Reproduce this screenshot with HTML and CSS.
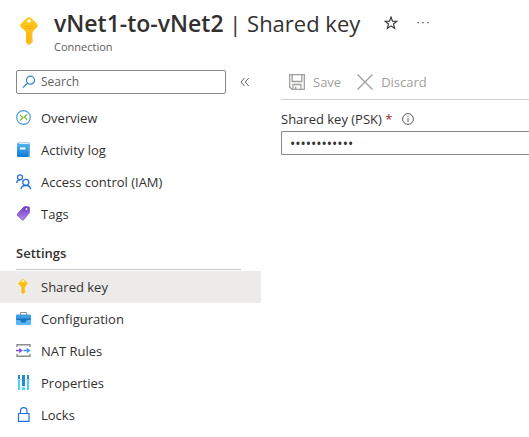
FILE: index.html
```html
<!DOCTYPE html>
<html lang="en">
<head>
<meta charset="utf-8">
<title>vNet1-to-vNet2 | Shared key</title>
<link rel="stylesheet" href="styles.css">
</head>
<body>
<svg class="defs" width="0" height="0" aria-hidden="true">
  <defs>
    <linearGradient id="gold" x1="0" y1="0" x2="0" y2="1"><stop offset="0" stop-color="#ffca1a"/><stop offset="1" stop-color="#fdb913"/></linearGradient>
    <linearGradient id="blue" x1="0" y1="0" x2="0" y2="1"><stop offset="0" stop-color="#50b0f4"/><stop offset="1" stop-color="#0d7cd8"/></linearGradient>
    <linearGradient id="violet" x1="0" y1="0" x2="0" y2="1"><stop offset="0" stop-color="#7137c8"/><stop offset="1" stop-color="#b28ae8"/></linearGradient>
    <symbol id="key" viewBox="0 0 18 28">
      <path d="M7.2 .7Q9 -.4 10.800 .7L17 6.800Q18.600 8.500 17 10.300L12.600 14.800V16.500L12 17.500L12.800 18.500L12 19.500L12.800 20.700L12 21.700L12.800 22.700V24.500L9.800 27.500Q9 28.200 8.200 27.500L6 25.200V14.800L1 10.300Q-.6 8.500 1 6.800Z" fill="url(#gold)"/>
      <circle cx="9" cy="4" r="1.800" fill="#fff"/>
      <path d="M5.200 9.500H13M5.200 11.500H13" stroke="#ffa81c" stroke-width="1"/>
      <path d="M8.200 15.500V25" stroke="#ffa81c" stroke-width="1.200"/>
    </symbol>
  </defs>
</svg>
<header class="header">
  <svg class="header-icon" viewBox="0 0 18 28" aria-hidden="true"><use href="#key"/></svg>
  <div class="header-text">
    <div class="title-row">
      <h1 class="title"><strong>vNet1-to-vNet2</strong> | Shared key</h1>
      <button class="icon-button" aria-label="Add to favorites"><svg width="14" height="14" viewBox="0 0 14 14"><path d="M7 1L8.500 5.200H13L9.500 8L10.700 12.500L7 9.900L3.300 12.500L4.500 8L1 5.200H5.500Z" fill="none" stroke="#323130" stroke-width="1.100"/></svg></button>
      <button class="icon-button more" aria-label="More"><svg width="14" height="14" viewBox="0 0 14 14"><path d="M1.500 6h1.200v1.200H1.500zM6.400 6h1.200v1.200H6.400zM11.300 6h1.200v1.200h-1.200z" fill="#323130"/></svg></button>
    </div>
    <p class="subtitle">Connection</p>
  </div>
</header>
<div class="body">
  <aside class="sidebar">
    <div class="search-row">
      <label class="search"><svg width="14" height="14" viewBox="0 0 14 14" aria-hidden="true"><circle cx="8.500" cy="5.200" r="4" fill="none" stroke="#2f86cf" stroke-width="1.200"/><path d="M5.500 8L1 12.700" stroke="#2f86cf" stroke-width="1.200"/></svg><input class="search-input" type="text" placeholder="Search" aria-label="Search"></label>
      <button class="icon-button" aria-label="Collapse menu"><svg width="14" height="14" viewBox="0 0 14 14"><path d="M6.500 3L3 7L6.500 11M10.700 3L7.200 7L10.700 11" fill="none" stroke="#605e5c"/></svg></button>
    </div>
    <nav class="nav">
      <a class="nav-item" href="#"><svg class="nav-icon" viewBox="0 0 16 16"><circle cx="7.500" cy="7.500" r="6.800" fill="#fff" stroke="#4a9be2" stroke-width="1.200"/><path d="M4 5L6.900 7.800L4 10.500M11.200 4.300L8.300 7L11.200 9.800" fill="none" stroke="#78bd2b" stroke-width="1.200"/></svg>Overview</a>
      <a class="nav-item" href="#"><svg class="nav-icon" viewBox="0 0 16 16"><path d="M2.500 .5H13Q14 .5 14 1.500V14Q14 15 13 15H2.500Q1 15 1 13.500V2Q1 .5 2.500 .5Z" fill="#6fa9d8"/><path d="M3 .8H13.200V2.200H3Z" fill="#d9ebf8"/><path d="M1 2H12.500V15H2.500Q1 15 1 13.500Z" fill="url(#blue)"/><path d="M4 5.500H9.500V7.500H4Z" fill="#fff"/></svg>Activity log</a>
      <a class="nav-item" href="#"><svg class="nav-icon" viewBox="0 0 16 16" fill="none" stroke="#2472de" stroke-width="1.300"><circle cx="4" cy="3.300" r="2.500"/><path d="M.7 9Q.8 6.200 3.800 5.900"/><circle cx="9.800" cy="8.400" r="3"/><path d="M5 15.300Q5.300 11.500 9.800 11.500T14.500 15.300"/></svg>Access control (IAM)</a>
      <a class="nav-item" href="#"><svg class="nav-icon" viewBox="0 0 16 16"><path d="M9 0L13 .6Q14 .8 14 2L14 6.500L7.500 14.500L6 14.500L1 9.500V8Z" fill="#9470d0"/><path d="M7.600 .8L11.900 .8Q13.200 1 13.200 2.400L13 7L6.500 14.300L1 8.300Z" fill="url(#violet)"/><circle cx="10.500" cy="3" r=".9" fill="#fff"/></svg>Tags</a>
    </nav>
    <h2 class="group-title">Settings</h2>
    <nav class="nav" aria-label="Settings">
      <a class="nav-item selected" href="#"><svg class="nav-icon" viewBox="0 0 16 16"><use href="#key" x="2" y="0" width="10" height="15"/></svg>Shared key</a>
      <a class="nav-item" href="#"><svg class="nav-icon" viewBox="0 0 16 16"><path d="M4.500 4V1.500H10.500V4" fill="none" stroke="#8c9198"/><path d="M1 3.500H14Q15 3.500 15 4.500V8H0V4.500Q0 3.500 1 3.500Z" fill="#3f9de6"/><path d="M0 8H15V13Q15 14 14 14H1Q0 14 0 13Z" fill="#5bb6f5"/><path d="M0 7.500H15V8.500L10 9.500V11.500H5V9.500L0 8.500Z" fill="#1a73bd"/></svg>Configuration</a>
      <a class="nav-item" href="#"><svg class="nav-icon" viewBox="0 0 16 16"><path d="M1 4V1.700H14V4M1 11V13.300H14V11" fill="none" stroke="#8b8d90" stroke-width="1.400"/><path d="M0 6.800H3.200V4.700L6.800 7.500L3.200 10.300V8.200H0Z" fill="#8a4de0"/><path d="M7.500 6.800H10.800V4.700L14.500 7.500L10.800 10.300V8.200H7.500Z" fill="#329fe8"/></svg>NAT Rules</a>
      <a class="nav-item" href="#"><svg class="nav-icon" viewBox="0 0 16 16"><path d="M2 0H4V4H2ZM6 0H9V11H6ZM11 0H13V4H11Z" fill="#2a88cf"/><path d="M2 5H4V15H2ZM6 12.500H9V15H6ZM11 5H13V15H11Z" fill="#45d4f2"/><path d="M1 4.500H5M5.500 12H9.500M10 4.500H14" stroke="#9bdcf5"/></svg>Properties</a>
      <a class="nav-item" href="#"><svg class="nav-icon" viewBox="0 0 16 16" fill="none" stroke="#2472de" stroke-width="1.200"><path d="M2.500 6.500H13V14.300H2.500ZM4.500 6.500V4Q4.500 .7 7.700 .7T11 4V6.500"/></svg>Locks</a>
    </nav>
  </aside>
  <main class="content">
    <div class="toolbar">
      <button class="command" disabled><svg width="16" height="16" viewBox="0 0 16 16" fill="none" stroke="#a19f9d" stroke-width="1.300"><path d="M.7 .7H15.300V15.300H3L.7 13ZM3.200 .7V7.500H12.800V.7M4 15V10.500H12V15M6.700 15V12.500"/></svg>Save</button>
      <button class="command" disabled><svg width="16" height="16" viewBox="0 0 16 16" stroke="#a19f9d" stroke-width="1.300"><path d="M.5 .5L15.500 15.500M15.500 .5L.5 15.500"/></svg>Discard</button>
    </div>
    <div class="field-label"><label for="psk">Shared key (PSK) <span class="required">*</span></label><svg width="12" height="12" viewBox="0 0 12 12" role="img" aria-label="Information"><circle cx="6" cy="6" r="5.400" fill="none" stroke="#605e5c"/><path d="M6 5V9M6 3V4.200" stroke="#605e5c"/></svg></div>
    <input class="key-input" id="psk" type="password" value="123456789012">
  </main>
</div>
</body>
</html>
```
FILE: styles.css
```css
* { box-sizing: border-box; }
body {
  margin: 0;
  background: #fff;
  color: #323130;
  font: 13px/20px "Open Sans", "Noto Sans", sans-serif;
  overflow-x: hidden;
}
button, input { font: inherit; color: inherit; }
button { border: 0; padding: 0; background: none; }
svg { display: block; flex: none; }
.defs { position: absolute; }

.header { display: flex; gap: 16px; padding: 7px 20px 15px; }
.header-icon { width: 18px; height: 28px; margin-top: 10px; }
.title-row { display: flex; align-items: center; }
.title {
  margin: 0 24px 0 0;
  font-size: 22px;
  line-height: 32px;
  font-weight: 400;
  white-space: nowrap;
}
.title strong { font-size: 23px; font-weight: 600; }
.icon-button { display: flex; }
.more { margin-left: 18px; }
.subtitle { margin: 0; font-size: 11px; line-height: 16px; color: #605e5c; }

.body { display: flex; }
.sidebar { flex: 0 0 261px; }
.search-row { display: flex; align-items: center; gap: 12px; padding-left: 16px; margin-bottom: 8px; }
.search {
  display: flex;
  align-items: center;
  gap: 5px;
  width: 210px;
  height: 24px;
  padding: 0 5px;
  border: 1px solid #8a8886;
  border-radius: 2px;
}
.search-input { flex: 1; min-width: 0; border: 0; padding: 0; outline: 0; background: none; font-size: 12px; }
.search-input::placeholder { color: #605e5c; opacity: 1; }
.nav-item {
  display: flex;
  align-items: center;
  gap: 9px;
  height: 32px;
  padding-left: 16px;
  color: inherit;
  text-decoration: none;
}
.nav-icon { width: 16px; height: 16px; }
.selected { background: #edebe9; }
.group-title {
  margin: 8px 20px 0 16px;
  padding: 5px 0 6px;
  border-bottom: 1px solid #c8c6c4;
  font-size: 13px;
  font-weight: 600;
}
.group-title + .nav { padding-top: 1px; }

.content { flex: 1; min-width: 0; padding-left: 20px; }
.toolbar {
  display: flex;
  gap: 16px;
  height: 30px;
  padding: 0 8px 6px;
  border-bottom: 1px solid #d2d0ce;
}
.command { display: flex; align-items: center; gap: 8px; color: #a19f9d; }
.field-label { display: flex; align-items: center; gap: 10px; padding: 9px 0 2px; }
.required { color: #a4262c; }
.key-input {
  display: block;
  width: 100%;
  height: 24px;
  padding: 0 8px;
  border: 1px solid #8a8886;
  border-right: 0;
  border-radius: 2px 0 0 2px;
  outline: 0;
  font-size: 14px;
}
```
